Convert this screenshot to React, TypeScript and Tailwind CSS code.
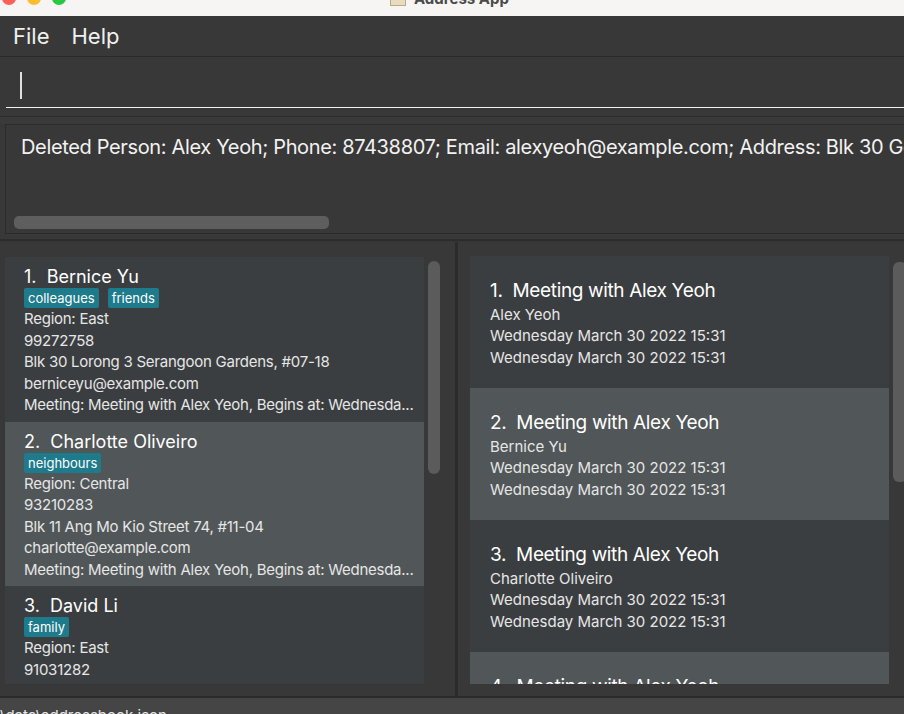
import React from "react";

const font = { fontFamily: "Inter, 'Open Sans', 'Liberation Sans', sans-serif" };

type Person = {
  idx: number;
  name: string;
  tags: string[];
  region: string;
  phone?: string;
  address?: string;
  email?: string;
  meeting?: string;
};

const people: Person[] = [
  {
    idx: 1,
    name: "Bernice Yu",
    tags: ["colleagues", "friends"],
    region: "East",
    phone: "99272758",
    address: "Blk 30 Lorong 3 Serangoon Gardens, #07-18",
    email: "berniceyu@example.com",
    meeting: "Meeting: Meeting with Alex Yeoh, Begins at: Wednesda...",
  },
  {
    idx: 2,
    name: "Charlotte Oliveiro",
    tags: ["neighbours"],
    region: "Central",
    phone: "93210283",
    address: "Blk 11 Ang Mo Kio Street 74, #11-04",
    email: "charlotte@example.com",
    meeting: "Meeting: Meeting with Alex Yeoh, Begins at: Wednesda...",
  },
  {
    idx: 3,
    name: "David Li",
    tags: ["family"],
    region: "East",
    phone: "91031282",
    address: "Blk 436 Serangoon Gardens Street 26, #16-43",
    email: "lidavid@example.com",
    meeting: "Meeting: Meeting with Alex Yeoh, Begins at: Wednesda...",
  },
];

const meetings = [
  { idx: 1, who: "Alex Yeoh" },
  { idx: 2, who: "Bernice Yu" },
  { idx: 3, who: "Charlotte Oliveiro" },
  { idx: 4, who: "David Li" },
];

function PersonCell({ p }: { p: Person }) {
  const even = p.idx % 2 === 0;
  return (
    <div
      className={`shrink-0 h-[164.5px] pl-[19px] pr-2 pt-[9px] ${even ? "bg-[#515658]" : "bg-[#3b3e40]"}`}
    >
      <div className="h-[22px] text-[18px] leading-[22px] text-white whitespace-pre">
        {p.idx}.  {p.name}
      </div>
      <div className="flex gap-[9px] h-[20px]">
        {p.tags.map((t) => (
          <span
            key={t}
            className="h-[20px] px-[4px] rounded-[2px] bg-[#1d7b8c] text-white text-[13px] leading-[20px]"
          >
            {t}
          </span>
        ))}
      </div>
      <div className="text-[15px] leading-[21.5px] text-[#e6e6e6] whitespace-nowrap tracking-[-0.25px]">
        <div>Region: {p.region}</div>
        <div>{p.phone}</div>
        <div>{p.address}</div>
        <div>{p.email}</div>
        <div>{p.meeting}</div>
      </div>
    </div>
  );
}

function MeetingCell({ idx, who }: { idx: number; who: string }) {
  const even = idx % 2 === 0;
  return (
    <div
      className={`shrink-0 h-[132px] pl-[20px] pt-[22px] ${even ? "bg-[#515658]" : "bg-[#3b3e40]"}`}
    >
      <div className="h-[25.5px] text-[19px] leading-[25.5px] text-white whitespace-pre tracking-[-0.35px]">
        {idx}.  Meeting with Alex Yeoh
      </div>
      <div className="text-[15px] leading-[21.5px] text-[#e6e6e6]">
        <div>{who}</div>
        <div>Wednesday March 30 2022 15:31</div>
        <div>Wednesday March 30 2022 15:31</div>
      </div>
    </div>
  );
}

export default function App() {
  return (
    <div
      className="w-[904px] h-[714px] overflow-hidden bg-[#383838] flex flex-col"
      style={font}
    >
      {/* Title bar */}
      <div className="h-[16px] shrink-0 bg-[#f6f5f4] overflow-hidden flex items-start">
        <div className="flex gap-[11px] pl-[2px] mt-[-9px]">
          <div className="w-[14px] h-[14px] rounded-full bg-[#fe5f57]" />
          <div className="w-[14px] h-[14px] rounded-full bg-[#febc2e]" />
          <div className="w-[14px] h-[14px] rounded-full bg-[#28c840]" />
        </div>
        <div className="ml-[324px] flex items-start gap-[8px]">
          <div className="w-[16px] h-[14px] mt-[-8px] bg-[#e8dcc0] border border-[#bba981]" />
          <span className="text-[15px] font-bold text-[#4a4a4a] leading-[17px] mt-[-10px]">
            Address App
          </span>
        </div>
      </div>

      {/* Menu bar */}
      <div className="h-[41px] shrink-0 flex items-center gap-[22px] pl-[13px] text-[22px] text-[#f0f0f0] border-b border-[#2a2a2a]">
        <span>File</span>
        <span>Help</span>
      </div>

      {/* Command box */}
      <div className="h-[51px] shrink-0 pl-[6px] flex flex-col">
        <div className="flex-1 pl-[14px] pt-[15px]">
          <div className="w-[1.5px] h-[27px] bg-[#e0e0e0]" />
        </div>
        <div className="h-[1.5px] bg-[#f2f2f2]" />
      </div>

      <div className="h-[8px] shrink-0" />
      <div className="h-[1px] shrink-0 bg-[#2c2c2c]" />
      <div className="h-[7px] shrink-0 bg-[#3a3a3a]" />

      {/* Result box */}
      <div className="h-[110px] shrink-0 ml-[5px] border border-[#2b2b2b] border-r-0 relative overflow-hidden">
        <div className="pl-[15px] pt-[10px] text-[20px] leading-[24px] text-[#f2f2f2] whitespace-nowrap tracking-[-0.35px]">
          Deleted Person: Alex Yeoh; Phone: 87438807; Email: alexyeoh@example.com; Address: Blk 30 Geylang Street 29, #06-40; Region: West; Tags: [friends]
        </div>
        <div className="absolute left-[8px] top-[91px] w-[315px] h-[13px] rounded-[5px] bg-[#5e5e5e]" />
      </div>

      <div className="h-[5px] shrink-0" />
      <div className="h-[2px] shrink-0 bg-[#2c2c2c]" />
      <div className="h-[1px] shrink-0 bg-[#353535]" />

      {/* Panels */}
      <div className="flex-1 flex min-h-0">
        {/* Left person list */}
        <div className="w-[455px] shrink-0 flex pt-[15px] pb-[12px] pl-[5px] relative">
          <div className="w-[419px] flex flex-col overflow-hidden">
            {people.map((p) => (
              <PersonCell key={p.idx} p={p} />
            ))}
          </div>
          <div className="absolute left-[428px] top-[19px] w-[12px] h-[213px] rounded-[6px] bg-[#5b5b5b]" />
        </div>
        <div className="w-[3px] shrink-0 bg-[#2b2b2b]" />
        {/* Right meeting list */}
        <div className="flex-1 flex pt-[14px] pb-[12px] pl-[12px] relative">
          <div className="w-[419px] flex flex-col overflow-hidden">
            {meetings.map((m) => (
              <MeetingCell key={m.idx} idx={m.idx} who={m.who} />
            ))}
          </div>
          <div className="absolute left-[435px] top-[20px] w-[14px] h-[220px] rounded-[6px] bg-[#5b5b5b]" />
        </div>
      </div>

      {/* Status bar */}
      <div className="h-[18px] shrink-0 border-t-2 border-[#2b2b2b] bg-[#454545] overflow-hidden">
        <div className="pt-[9px] text-[15px] leading-[18px] text-[#e6e6e6] whitespace-nowrap">
          \data\addressbook.json
        </div>
      </div>
    </div>
  );
}
